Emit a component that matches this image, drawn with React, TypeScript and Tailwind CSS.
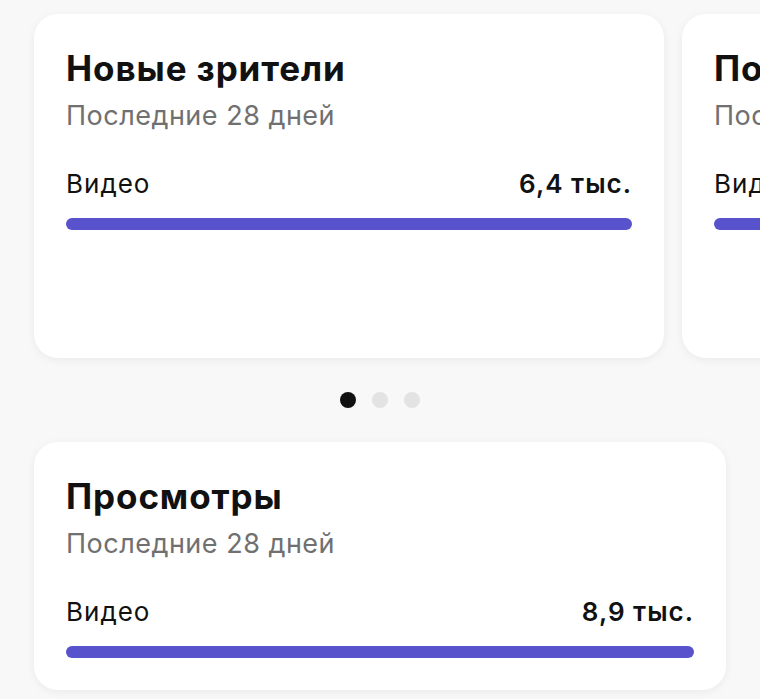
import type { ReactNode } from "react";

const font = { fontFamily: "Inter, 'Noto Sans', sans-serif" };

interface StatCardProps {
  title: string;
  label: string;
  value: string;
  className?: string;
  children?: ReactNode;
}

function StatCard({ title, label, value, className }: StatCardProps) {
  return (
    <div
      className={
        "shrink-0 rounded-[24px] bg-white px-8 pt-[34px] shadow-[0_2px_10px_rgba(0,0,0,0.06)] " +
        (className ?? "")
      }
    >
      <div className="text-[35px] leading-[40px] font-bold tracking-[0.9px] text-[#111111] whitespace-nowrap">
        {title}
      </div>
      <div className="mt-3 text-[27px] leading-[32px] tracking-[0.5px] text-[#707070] whitespace-nowrap">
        Последние 28 дней
      </div>
      <div className="mt-[37px] flex items-center justify-between text-[26px] leading-[30px] tracking-[1px] text-[#111111]">
        <span>{label}</span>
        <span className="font-semibold">{value}</span>
      </div>
      <div className="mt-[19px] h-3 w-full rounded-full bg-[#5852cc]" />
    </div>
  );
}

export default function App() {
  return (
    <div className="min-h-[699px] w-[760px] overflow-hidden bg-[#f8f8f8] pt-[14px]" style={font}>
      {/* carousel */}
      <div className="flex gap-[18px] pl-[34px]">
        <StatCard title="Новые зрители" label="Видео" value="6,4 тыс." className="h-[344px] w-[630px]" />
        <StatCard title="Повторные зрители" label="Видео" value="2,1 тыс." className="h-[344px] w-[630px]" />
      </div>

      <div className="flex h-[84px] items-center justify-center gap-4">
        <span className="h-4 w-4 rounded-full bg-[#111111]" />
        <span className="h-4 w-4 rounded-full bg-[#e3e3e3]" />
        <span className="h-4 w-4 rounded-full bg-[#e3e3e3]" />
      </div>

      <div className="pl-[34px]">
        <StatCard title="Просмотры" label="Видео" value="8,9 тыс." className="h-[248px] w-[692px]" />
      </div>
    </div>
  );
}
